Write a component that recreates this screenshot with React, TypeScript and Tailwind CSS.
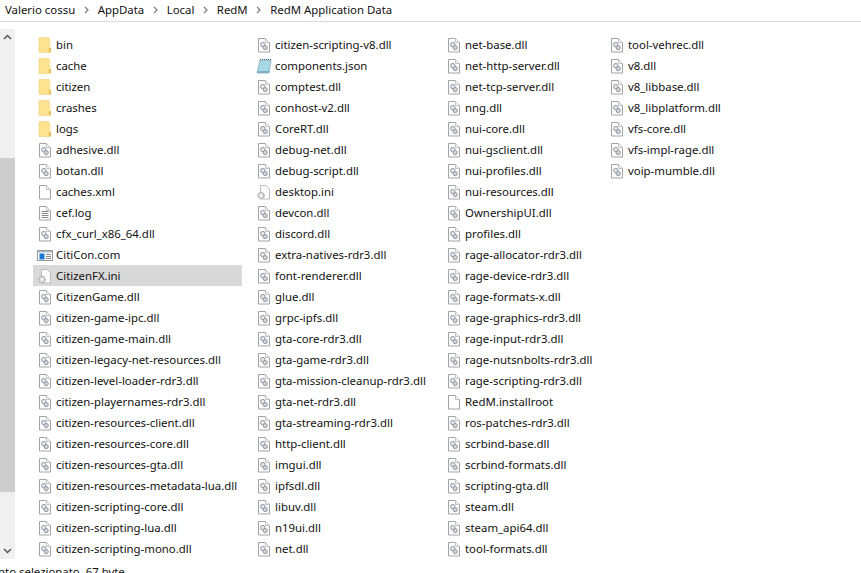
type Kind = "folder" | "dll" | "file" | "log" | "com" | "ini" | "json";

const F = (name: string, kind: Kind = "dll") => ({ name, kind });

const columns = [
  {
    width: "w-[219px]",
    items: [
      F("bin", "folder"), F("cache", "folder"), F("citizen", "folder"), F("crashes", "folder"), F("logs", "folder"),
      F("adhesive.dll"), F("botan.dll"), F("caches.xml", "file"), F("cef.log", "log"), F("cfx_curl_x86_64.dll"),
      F("CitiCon.com", "com"), F("CitizenFX.ini", "ini"), F("CitizenGame.dll"), F("citizen-game-ipc.dll"),
      F("citizen-game-main.dll"), F("citizen-legacy-net-resources.dll"), F("citizen-level-loader-rdr3.dll"),
      F("citizen-playernames-rdr3.dll"), F("citizen-resources-client.dll"), F("citizen-resources-core.dll"),
      F("citizen-resources-gta.dll"), F("citizen-resources-metadata-lua.dll"), F("citizen-scripting-core.dll"),
      F("citizen-scripting-lua.dll"), F("citizen-scripting-mono.dll"),
    ],
  },
  {
    width: "w-[190px]",
    items: [
      F("citizen-scripting-v8.dll"), F("components.json", "json"), F("comptest.dll"), F("conhost-v2.dll"), F("CoreRT.dll"),
      F("debug-net.dll"), F("debug-script.dll"), F("desktop.ini", "ini"), F("devcon.dll"), F("discord.dll"),
      F("extra-natives-rdr3.dll"), F("font-renderer.dll"), F("glue.dll"), F("grpc-ipfs.dll"), F("gta-core-rdr3.dll"),
      F("gta-game-rdr3.dll"), F("gta-mission-cleanup-rdr3.dll"), F("gta-net-rdr3.dll"), F("gta-streaming-rdr3.dll"),
      F("http-client.dll"), F("imgui.dll"), F("ipfsdl.dll"), F("libuv.dll"), F("n19ui.dll"), F("net.dll"),
    ],
  },
  {
    width: "w-[163px]",
    items: [
      F("net-base.dll"), F("net-http-server.dll"), F("net-tcp-server.dll"), F("nng.dll"), F("nui-core.dll"),
      F("nui-gsclient.dll"), F("nui-profiles.dll"), F("nui-resources.dll"), F("OwnershipUI.dll"), F("profiles.dll"),
      F("rage-allocator-rdr3.dll"), F("rage-device-rdr3.dll"), F("rage-formats-x.dll"), F("rage-graphics-rdr3.dll"),
      F("rage-input-rdr3.dll"), F("rage-nutsnbolts-rdr3.dll"), F("rage-scripting-rdr3.dll"), F("RedM.installroot", "file"),
      F("ros-patches-rdr3.dll"), F("scrbind-base.dll"), F("scrbind-formats.dll"), F("scripting-gta.dll"), F("steam.dll"),
      F("steam_api64.dll"), F("tool-formats.dll"),
    ],
  },
  {
    width: "w-[200px]",
    items: [
      F("tool-vehrec.dll"), F("v8.dll"), F("v8_libbase.dll"), F("v8_libplatform.dll"), F("vfs-core.dll"),
      F("vfs-impl-rage.dll"), F("voip-mumble.dll"),
    ],
  },
];

const crumbs = ["Valerio cossu", "AppData", "Local", "RedM", "RedM Application Data"];

// tutte le icone stanno in un riquadro 18x16, la pagina va da x=3.5 a x=14.5
function Icon({ kind }: { kind: Kind }) {
  const page = (
    <>
      <path d="M3.5 1.5H10.5L14.5 5.5V15H3.5Z" fill="#fff" stroke="#a3a3a3" />
      <path d="M10.5 1.5V5.5H14.5" fill="#f4f4f4" stroke="#c2c2c2" />
    </>
  );
  return (
    <svg width="18" height="16" viewBox="0 0 18 16" fill="none" className="shrink-0">
      {kind === "folder" && (
        <>
          <path d="M3 0.5H13V15.5H3Z" fill="#fde28f" stroke="#ecca6e" strokeWidth="0.5" />
          <path d="M13 1L15 3.5V15.5H13Z" fill="#fdeebd" />
          <path d="M13 11L15 11V15.5H13Z" fill="#e8c05a" />
        </>
      )}
      {kind === "file" && page}
      {kind === "dll" && (
        <>
          {page}
          <circle cx="7.8" cy="7.6" r="2.2" fill="#e4e8ec" stroke="#8e96a0" />
          <circle cx="10.2" cy="10.6" r="2.1" fill="#cfd4da" stroke="#8e96a0" />
        </>
      )}
      {kind === "log" && (
        <>
          {page}
          <path d="M5.5 6.5H12.5M5.5 8.5H12.5M5.5 10.5H12.5M5.5 12.5H12.5" stroke="#8c8c8c" />
        </>
      )}
      {kind === "ini" && (
        <>
          <path d="M5.5 1.5H11L14.5 5V15H5.5Z" fill="#fcfcfc" stroke="#bcbcbc" />
          <circle cx="6" cy="11.5" r="3.2" fill="#dcdcdc" stroke="#8f8f8f" strokeDasharray="1.5 0.8" />
          <circle cx="6" cy="11.5" r="1.1" fill="#fff" />
        </>
      )}
      {kind === "com" && (
        <>
          <rect x="1.5" y="3.5" width="15" height="10" fill="#fff" stroke="#9a9a9a" />
          <rect x="2" y="4" width="14" height="1.5" fill="#a9b8c8" />
          <rect x="3.5" y="6.5" width="5" height="6" fill="#1c78d4" />
          <path d="M10 7.5H15M10 9.5H15M10 11.5H15" stroke="#8c8c8c" />
        </>
      )}
      {kind === "json" && (
        <>
          <path d="M5 2H16L14 15H2Z" fill="#a8d8e4" stroke="#7fa6b5" strokeWidth="0.7" />
          <path d="M5 1.5H16" stroke="#4d6672" strokeDasharray="1 1" />
          <path d="M14.2 15H2L2.4 13H14.5Z" fill="#7fb0c2" />
        </>
      )}
    </svg>
  );
}

export default function App() {
  return (
    <div className="flex h-[573px] w-[861px] flex-col overflow-hidden bg-white text-[11.4px] leading-[21px] text-[#111] [font-family:'Noto_Sans',sans-serif]">
      {/* barra del percorso */}
      <div className="flex h-[22px] shrink-0 items-center border-b border-[#d9d9d9] pb-[2px] pl-[5px]">
        {crumbs.map((c, i) => (
          <div key={c} className="flex items-center">
            {i > 0 && (
              <svg width="5" height="8" viewBox="0 0 5 8" className="mx-[8.75px]" fill="none">
                <path d="M1 1L4 4L1 7" stroke="#7a7a7a" strokeWidth="1.2" />
              </svg>
            )}
            <span>{c}</span>
          </div>
        ))}
      </div>

      <div className="flex min-h-0 flex-1 pt-[7px]">
        {/* barra di scorrimento */}
        <div className="flex h-[530px] w-[15px] shrink-0 flex-col bg-[#f0f0f0]">
          <div className="flex h-[16px] shrink-0 items-center justify-center">
            <svg width="9" height="6" viewBox="0 0 9 6" fill="none">
              <path d="M1 5L4.5 1.5L8 5" stroke="#555" strokeWidth="1.5" />
            </svg>
          </div>
          <div className="mt-[113px] h-[334px] bg-[#cdcdcd]" />
          <div className="mt-auto flex h-[16px] shrink-0 items-center justify-center">
            <svg width="9" height="6" viewBox="0 0 9 6" fill="none">
              <path d="M1 1L4.5 4.5L8 1" stroke="#555" strokeWidth="1.5" />
            </svg>
          </div>
        </div>

        {/* elenco file */}
        <div className="ml-[18px] flex pt-[5px]">
          {columns.map((col, i) => (
            <div key={i} className={`flex flex-col ${col.width}`}>
              {col.items.map((it) => (
                <div
                  key={it.name}
                  className={`flex h-[21px] w-[209px] items-center pl-[3px] whitespace-nowrap ${
                    it.name === "CitizenFX.ini" ? "bg-[#d9d9d9]" : ""
                  }`}
                >
                  <Icon kind={it.kind} />
                  <span className="ml-[2px]">{it.name}</span>
                </div>
              ))}
            </div>
          ))}
        </div>
      </div>

      <div className="-ml-[2px] h-[7px] shrink-0 leading-[12px] whitespace-pre">nto selezionato  67 byte</div>
    </div>
  );
}
